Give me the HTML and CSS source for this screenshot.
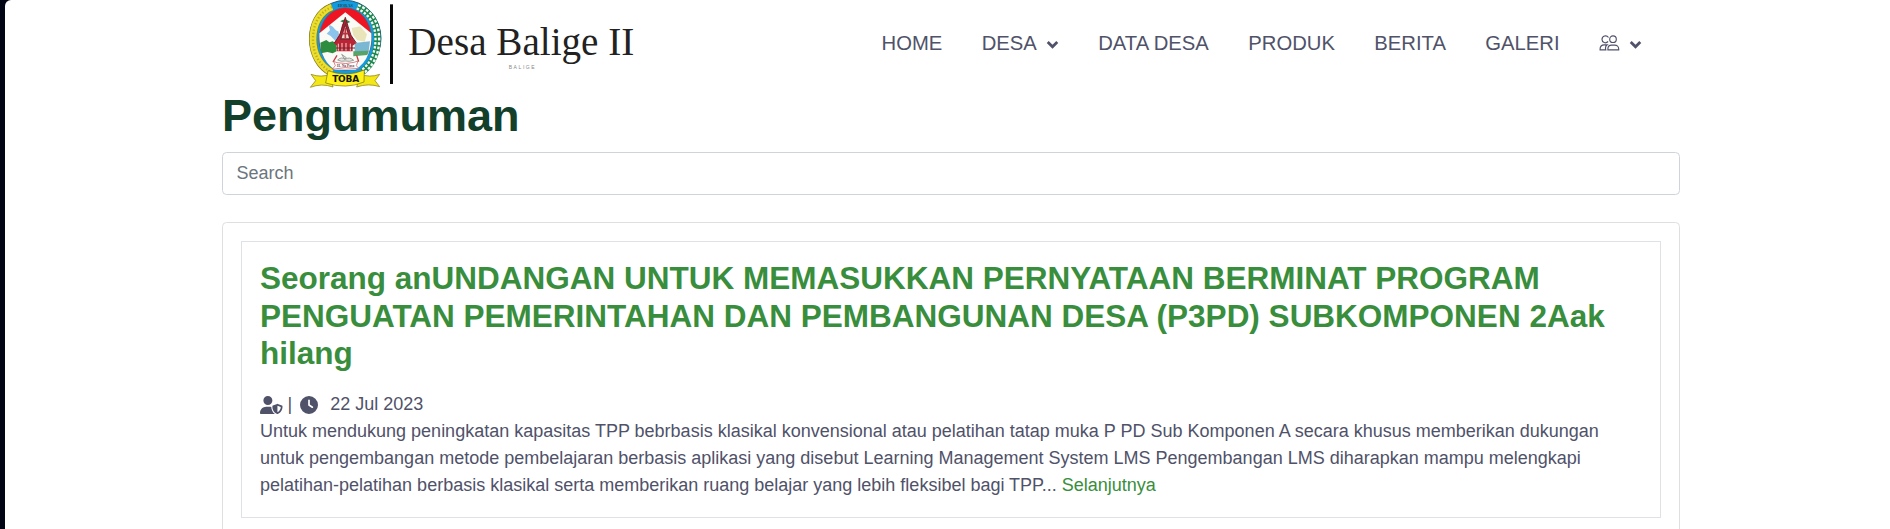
FILE: index.html
```html
<!DOCTYPE html>
<html lang="id">
<head>
<meta charset="utf-8">
<title>Pengumuman - Desa Balige II</title>
<link rel="stylesheet" href="styles.css">
</head>
<body>
<div class="page">
  <header class="header">
    <a class="brand">
      <svg width="360" height="92" viewBox="0 0 1080 276">
        <ellipse cx="136" cy="115" rx="107" ry="114" fill="#129be0" stroke="#205a78" stroke-width="3"/>
        <path d="M96 21C56 36 39 75 39 117c0 44 20 82 57 101" fill="none" stroke="#8a7d1c" stroke-width="24"/>
        <path d="M96 21C56 36 39 75 39 117c0 44 20 82 57 101" fill="none" stroke="#ecdf2c" stroke-width="20"/>
        <path d="M96 21C56 36 39 75 39 117c0 44 20 82 57 101" fill="none" stroke="#c0ad22" stroke-width="7" stroke-dasharray="4 6"/>
        <path d="M172 20c42 18 60 54 60 97 0 44-16 76-44 98" fill="none" stroke="#1c8650" stroke-width="20"/>
        <path d="M172 20c42 18 60 54 60 97 0 44-16 76-44 98" fill="none" stroke="#f4faf2" stroke-width="18" stroke-dasharray="8 5"/>
        <path d="M172 20c42 18 60 54 60 97 0 44-16 76-44 98" fill="none" stroke="#1c8650" stroke-width="4"/>
        <ellipse cx="136" cy="117" rx="79" ry="94" fill="#ee1422" stroke="#2c7694" stroke-width="2"/>
        <path d="M136 37l78 63c3 44-12 88-47 109h-63c-34-22-47-62-46-109z" fill="#fafbf7"/>
        <path d="M86 76c14-2 18 17 29 18l3 14-12 14-14-14-12-7 10-10z" fill="#8cc4ec"/>
        <path d="M155 84l26-5 20 24-7 22-22-4-12-15z" fill="#eae4ba"/>
        <path d="M121 64q14-12 30 2l-13 5z" fill="#208a46"/>
        <path d="M61 128l18-8 9 7 10-3 12 7v23l-12 6-16-4-19 4z" fill="#2d8d3f"/>
        <path d="M164 129l46-5-5 37-41 1z" fill="#79b7d3"/>
        <path d="M160 154l46-2-4 13-42 4z" fill="#58a36a"/>
        <path d="M136 54l7 22 8 25 17 29-10 7v17h-47v-17l-9-7 18-30 6-25z" fill="#bb2434"/>
        <path d="M136 72l-14 45h28z" fill="#f1d7ca" stroke="#7b2632" stroke-width="4"/>
        <path d="M136 83v32m-9-14h18" stroke="#bd3342" stroke-width="5"/>
        <path d="M115 131v21m11-23v23m12-23v23m13-21v21" stroke="#f0d8d0" stroke-width="3"/>
        <path d="M136 52l-8 27-9 27-16 23m33-77l8 27 9 27 16 23M108 144h57" fill="none" stroke="#74202b" stroke-width="3"/>
        <path d="M111 166l-12 20m71-20l6 19" stroke="#c83c43" stroke-width="4"/>
        <path d="M113 180q11-11 23-2 12-9 25 3-12 5-25 2-13 3-23-3zM134 178l-9-15 14 10z" fill="#e5e5df" stroke="#777a76" stroke-width="2"/>
        <path d="M101 184l10 4q28 6 51-1l12-4-5 14 8 9-15-1q-27-5-51 1l-14 2 9-11z" fill="#fff" stroke="#c94e58" stroke-width="2"/>
        <text class="crest-motto" x="137" y="200">H. Na Poso</text>
        <text class="crest-name" x="136" y="20">HORAS</text>
        <path d="M91 222q-26 12-58 1l14 19-16 20q34-13 68-1zM181 222q26 12 58 1l-14 19 14 18q-34-11-69 1z" fill="#f3e716" stroke="#807412" stroke-width="2"/>
        <path d="M84 212q54 21 109-2l-1 36q-54 23-115 3z" fill="#fff018" stroke="#77700f" stroke-width="2"/>
        <text class="crest-label" x="137" y="246" textLength="81">TOBA</text>
        <path d="M270 13h9v239h-9z" fill="#080808"/>
        <text class="brand-name" x="325" y="164" textLength="678" lengthAdjust="spacingAndGlyphs">Desa Balige II</text>
        <text class="brand-sub" x="626" y="207" textLength="78">BALIGE</text>
      </svg>
    </a>
    <nav class="nav">
      <a>HOME</a>
      <a>DESA <svg class="chevron" viewBox="0 0 12 8"><path d="M1.6 1.700L6 6l4.400-4.300"/></svg></a>
      <a>DATA DESA</a>
      <a>PRODUK</a>
      <a>BERITA</a>
      <a>GALERI</a>
      <a><svg class="people" viewBox="0 0 20 16"><circle cx="13.500" cy="4.200" r="3.300"/><path d="M8.400 14.800v-.9c0-2.300 1.800-3.800 3.800-3.800h3c2.200 0 4 1.700 4 3.800v.9zM8.600 6.500C6.300 9 2.500 7.500 2.500 4.500c0-3.700 4.500-4.900 6.500-2M6.300 14.800H.6v-.9c0-2.700 2-4.100 4.200-4.100h2.800c-1.800 1.400-1.800 3.400-1.300 5z"/></svg><svg class="chevron" viewBox="0 0 12 8"><path d="M1.600 1.700L6 6l4.400-4.300"/></svg></a>
    </nav>
  </header>
  <main class="container">
    <h1 class="heading">Pengumuman</h1>
    <input class="search" type="text" placeholder="Search">
    <section class="card">
      <article class="post">
        <h3 class="post-title">Seorang anUNDANGAN UNTUK MEMASUKKAN PERNYATAAN BERMINAT PROGRAM PENGUATAN PEMERINTAHAN DAN PEMBANGUNAN DESA (P3PD) SUBKOMPONEN 2Aak hilang</h3>
        <div class="meta">
          <svg class="author" viewBox="0 0 640 512"><path d="M224 256a128 128 0 1 0 0-256 128 128 0 1 0 0 256zm-45.700 48C79.800 304 0 383.800 0 482.300 0 498.700 13.300 512 29.700 512h388.600c1.800 0 3.500-.2 5.300-.5-76.300-55.100-99.800-141-103.100-200.200-16.100-4.800-33.100-7.300-50.700-7.300zm308.800-78.300l-120 48C358 277.400 352 286.200 352 296c0 63.300 25.900 168.800 134.800 214.200 5.900 2.500 12.600 2.500 18.500 0C614.100 464.800 640 359.300 640 296c0-9.800-6-18.600-15.100-22.300l-120-48c-5.700-2.300-12.100-2.300-17.800 0zM591.400 312c-3.900 50.700-27.200 116.700-95.400 149.700V273.800z"/></svg>
          <span>|</span>
          <svg class="clock" viewBox="0 0 512 512"><path d="M256 0a256 256 0 1 1 0 512A256 256 0 1 1 256 0zM232 120v136c0 8 4 15.500 10.700 20l96 64c11 7.400 25.900 4.400 33.300-6.700s4.400-25.900-6.700-33.300L280 243.200V120c0-13.300-10.700-24-24-24s-24 10.700-24 24z"/></svg>
          <span>22 Jul 2023</span>
        </div>
        <p class="excerpt">Untuk mendukung peningkatan kapasitas TPP bebrbasis klasikal konvensional atau pelatihan tatap muka P PD Sub Komponen A secara khusus memberikan dukungan untuk pengembangan metode pembelajaran berbasis aplikasi yang disebut Learning Management System LMS Pengembangan LMS diharapkan mampu melengkapi pelatihan-pelatihan berbasis klasikal serta memberikan ruang belajar yang lebih fleksibel bagi TPP... <a class="more">Selanjutnya</a></p>
      </article>
    </section>
  </main>
</div>
</body>
</html>
```
FILE: styles.css
```css
* { box-sizing: border-box; }
html { background: #020514; overflow: hidden; }
body {
  margin: 0;
  font: 18px/27px "Liberation Sans", Arial, sans-serif;
  color: #4f5269;
}
.page {
  height: 529px;
  margin-left: 5px;
  overflow: hidden;
  background: #fff;
  border-top-left-radius: 6px;
}
.header {
  height: 92px;
  display: flex;
  justify-content: space-between;
  padding: 0 248px 0 295px;
}
.brand, .brand svg { display: block; }
.crest-label { font: bold 27px "DejaVu Sans", sans-serif; text-anchor: middle; fill: #17180c; }
.crest-name { font: bold 13px "Liberation Serif", serif; text-anchor: middle; fill: #244956; }
.crest-motto { font: bold 11px "Liberation Serif", serif; text-anchor: middle; fill: #6c3940; }
.brand-name { font: 117px "Liberation Serif", serif; fill: #222; }
.brand-sub { font: 15px "Liberation Sans", sans-serif; fill: #888; }
.nav {
  display: flex;
  gap: 39.4px;
  height: 86px;
  align-items: center;
  font-size: 20.25px;
}
.nav a { display: flex; align-items: center; white-space: nowrap; }
.chevron {
  width: 13px;
  height: 9px;
  margin: 3px 0 0 9px;
  fill: none;
  stroke: currentColor;
  stroke-width: 2.6;
}
.people { width: 21px; height: 16px; fill: none; stroke: currentColor; stroke-width: 1.15; }
.container { width: 1458px; margin-left: 217px; }
.heading {
  margin: 0;
  height: 60px;
  font-size: 45px;
  line-height: 47px;
  color: #12402a;
}
.search {
  display: block;
  width: 100%;
  height: 43px;
  padding: 6px 13.5px;
  border: 1px solid #ced4da;
  border-radius: 4.5px;
  background: #fff;
  font: inherit;
}
.search::placeholder { color: #6c757d; opacity: 1; }
.card {
  height: 340px;
  margin-top: 27px;
  padding: 18px;
  border: 1px solid #dfdfdf;
  border-radius: 4.5px;
}
.post { height: 277px; padding: 18px; border: 1px solid #dee2e6; }
.post-title { margin: 0 0 18.6px; font-size: 31.5px; line-height: 37.5px; color: #388e3c; }
.meta { display: flex; align-items: center; height: 27px; }
.meta svg { fill: currentColor; }
.author { width: 22.5px; height: 18px; margin-right: 5px; }
.clock { width: 18px; height: 18px; margin: 0 12px 0 8px; }
.excerpt { margin: 0; }
.more { color: #388e3c; }
```
